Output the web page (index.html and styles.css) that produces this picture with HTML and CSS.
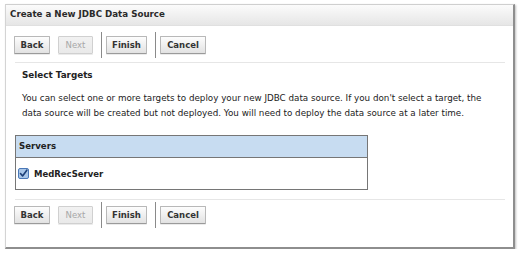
FILE: index.html
```html
<!DOCTYPE html>
<html>
<head>
<meta charset="utf-8">
<link rel="stylesheet" href="styles.css">
</head>
<body>
<div class="panel">
  <div class="header">Create a New JDBC Data Source</div>
  <div class="content">
    <div class="toolbar">
      <button class="btn w-back">Back</button>
      <button class="btn w-next disabled">Next</button>
      <span class="sep"></span>
      <button class="btn w-finish">Finish</button>
      <span class="sep"></span>
      <button class="btn w-cancel">Cancel</button>
    </div>
    <div class="rule"></div>
    <div class="section">
      <div class="section-title">Select Targets</div>
      <p class="desc">You can select one or more targets to deploy your new JDBC data source. If you don't select a target, the data source will be created but not deployed. You will need to deploy the data source at a later time.</p>
      <div class="table">
        <div class="thead">Servers</div>
        <div class="row">
          <span class="check"><svg width="11" height="11" viewBox="0 0 11 11"><rect x="0.5" y="0.5" width="10" height="10" rx="1.5" fill="#a9c6e8" stroke="#4a78b8"/><path d="M2.5 5.5 L4.6 8 L8.8 2.2" fill="none" stroke="#1c3f78" stroke-width="1.6" stroke-linecap="round" stroke-linejoin="round"/></svg></span>
          <span class="name">MedRecServer</span>
        </div>
      </div>
    </div>
    <div class="rule"></div>
    <div class="toolbar bottom">
      <button class="btn w-back">Back</button>
      <button class="btn w-next disabled">Next</button>
      <span class="sep"></span>
      <button class="btn w-finish">Finish</button>
      <span class="sep"></span>
      <button class="btn w-cancel">Cancel</button>
    </div>
  </div>
</div>
</body>
</html>
```

FILE: styles.css
```css
html, body {
  margin: 0;
  padding: 0;
  background: #ffffff;
}
body {
  font-family: "DejaVu Sans", Verdana, sans-serif;
  color: #222;
}
.panel {
  margin: 4px 0 0 5px;
  width: 510px;
  height: 245px;
  border-top: 1px solid #cfcfcf;
  border-left: 1px solid #d4d4d4;
  border-right: 2px solid #8e8e8e;
  border-bottom: 2px solid #8e8e8e;
  box-shadow: 1px 1px 2px rgba(0,0,0,0.25);
  box-sizing: border-box;
  display: flex;
  flex-direction: column;
}
.header {
  height: 21px;
  box-sizing: border-box;
  padding: 4px 0 0 4px;
  font-size: 8.7px;
  font-weight: bold;
  color: #2a2a2a;
  background: linear-gradient(#fbfbfb, #e6e6e6);
  border-bottom: 1px solid #e0e0e0;
}
.content {
  padding: 0 8px 0 8px;
}
.toolbar {
  display: flex;
  align-items: center;
  height: 26px;
  margin-top: 6px;
}
.toolbar.bottom {
  margin-top: 2px;
}
.btn {
  height: 18px;
  box-sizing: border-box;
  padding: 0;
  margin: 0 8px 0 0;
  font-family: "DejaVu Sans", Verdana, sans-serif;
  font-size: 8.5px;
  font-weight: bold;
  color: #333;
  text-align: center;
  border: 1px solid #b8b8b8;
  border-bottom-color: #9a9a9a;
  border-radius: 1px;
  background: linear-gradient(#fdfdfd, #e2e2e2);
  box-shadow: 0 1px 0 rgba(0,0,0,0.08);
}
.w-back { width: 36px; }
.w-next { width: 35px; }
.w-finish { width: 41px; }
.w-cancel { width: 46px; }
.btn.disabled {
  color: #a8a8a8;
  font-weight: normal;
  background: linear-gradient(#f1f1f1, #e9e9e9);
  border-color: #d0d0d0;
}
.sep {
  width: 1px;
  height: 26px;
  background: #8a8a8a;
  margin: 0 4px 0 0;
}
.rule {
  height: 1px;
  margin: 4px 0 0 1px;
  background: #e6e6e6;
}
.section {
  padding: 0 0 0 8px;
}
.section-title {
  font-size: 8.8px;
  font-weight: bold;
  margin-top: 6px;
  line-height: 13px;
}
.desc {
  font-size: 8.75px;
  line-height: 15px;
  margin: 9px 0 0 0;
  max-width: 466px;
  color: #222;
}
.table {
  margin: 14px 0 9px -7px;
  width: 353px;
  border: 1px solid #767676;
  box-sizing: border-box;
}
.thead {
  height: 22px;
  box-sizing: border-box;
  padding: 5px 0 0 3px;
  background: #c7dcf1;
  border-bottom: 1px solid #767676;
  font-size: 8.6px;
  font-weight: bold;
}
.row {
  height: 31px;
  display: flex;
  align-items: center;
  padding-left: 2px;
}
.check {
  display: flex;
  margin-right: 5px;
}
.name {
  font-size: 8.5px;
  font-weight: bold;
}
```
